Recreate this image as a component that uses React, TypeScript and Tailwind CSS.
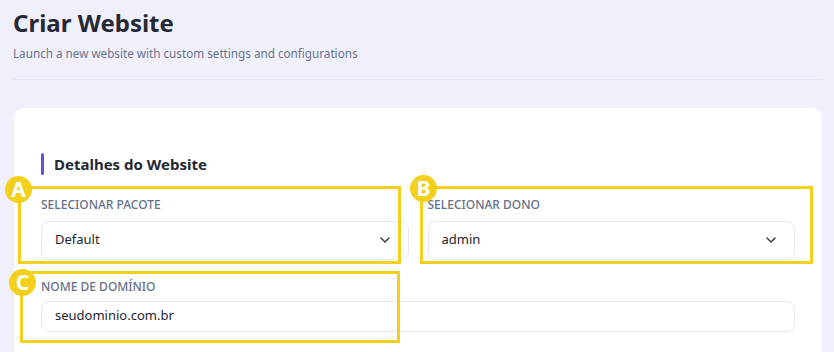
import React from 'react';
import { ChevronDown } from 'lucide-react';

const marks = [
  { letter: 'A', box: 'left-[18px] top-[186px] w-[383px] h-[78px]', dot: 'left-[5px] top-[176px]' },
  { letter: 'B', box: 'left-[420px] top-[186px] w-[393px] h-[78px]', dot: 'left-[410px] top-[175px]' },
  { letter: 'C', box: 'left-[20px] top-[271px] w-[380px] h-[72px]', dot: 'left-[9px] top-[269px]' },
];

const SelectField = ({ label, value }: { label: string; value: string }) => (
  <div className="flex flex-col">
    <label className="text-[12px] font-medium uppercase leading-4 text-[#64708a]">{label}</label>
    <div className="mt-[8px] flex h-[39px] items-center justify-between rounded-lg border border-[#e6e4f8] bg-white pl-[13px] pr-[15px]">
      <span className="text-[13px] text-[#1f2430]">{value}</span>
      <ChevronDown size={16} strokeWidth={2} className="text-[#2d3340]" />
    </div>
  </div>
);

export default function App() {
  return (
    <div className="relative h-[352px] w-[834px] overflow-hidden bg-[#f0effc] font-['Noto_Sans',sans-serif]">
      <div className="px-[13px] pt-[5px]">
        <h1 className="text-[24px] font-bold leading-9 text-[#252933]">Criar Website</h1>
        <p className="mt-[2px] text-[11.7px] leading-5 text-[#68738a]">Launch a new website with custom settings and configurations</p>
        <div className="mt-[16px] mr-[-2px] h-px bg-[#e6e5f5]" />
      </div>

      <div className="ml-[14px] mr-[12px] mt-[28px] rounded-[10px] bg-white px-[27px] pt-[45px] pb-8 shadow-[0_1px_3px_rgba(120,110,200,0.06)]">
        <div className="flex items-center gap-[10px]">
          <div className="h-[22px] w-[3px] rounded-sm bg-[#5b55d6]" />
          <h2 className="text-[15px] font-bold text-[#252933]">Detalhes do Website</h2>
        </div>

        <div className="mt-[21px] grid grid-cols-2 gap-x-[19px]">
          <SelectField label="Selecionar Pacote" value="Default" />
          <SelectField label="Selecionar Dono" value="admin" />
        </div>

        <div className="mt-[19px] flex flex-col">
          <label className="text-[12px] font-medium uppercase leading-4 text-[#64708a]">Nome de Domínio</label>
          <div className="mt-[6px] flex h-[31px] items-center rounded-lg border border-[#e6e4f8] bg-white pl-[13px]">
            <span className="text-[13px] text-[#1f2430]">seudominio.com.br</span>
          </div>
        </div>
      </div>

      {marks.map((m) => (
        <React.Fragment key={m.letter}>
          <div className={`absolute border-[3px] border-[#f2d01b] ${m.box}`} />
          <div className={`absolute flex h-[27px] w-[27px] items-center justify-center rounded-full bg-[#f2d01b] text-[21px] font-bold leading-none text-white ${m.dot}`}>
            {m.letter}
          </div>
        </React.Fragment>
      ))}
    </div>
  );
}
